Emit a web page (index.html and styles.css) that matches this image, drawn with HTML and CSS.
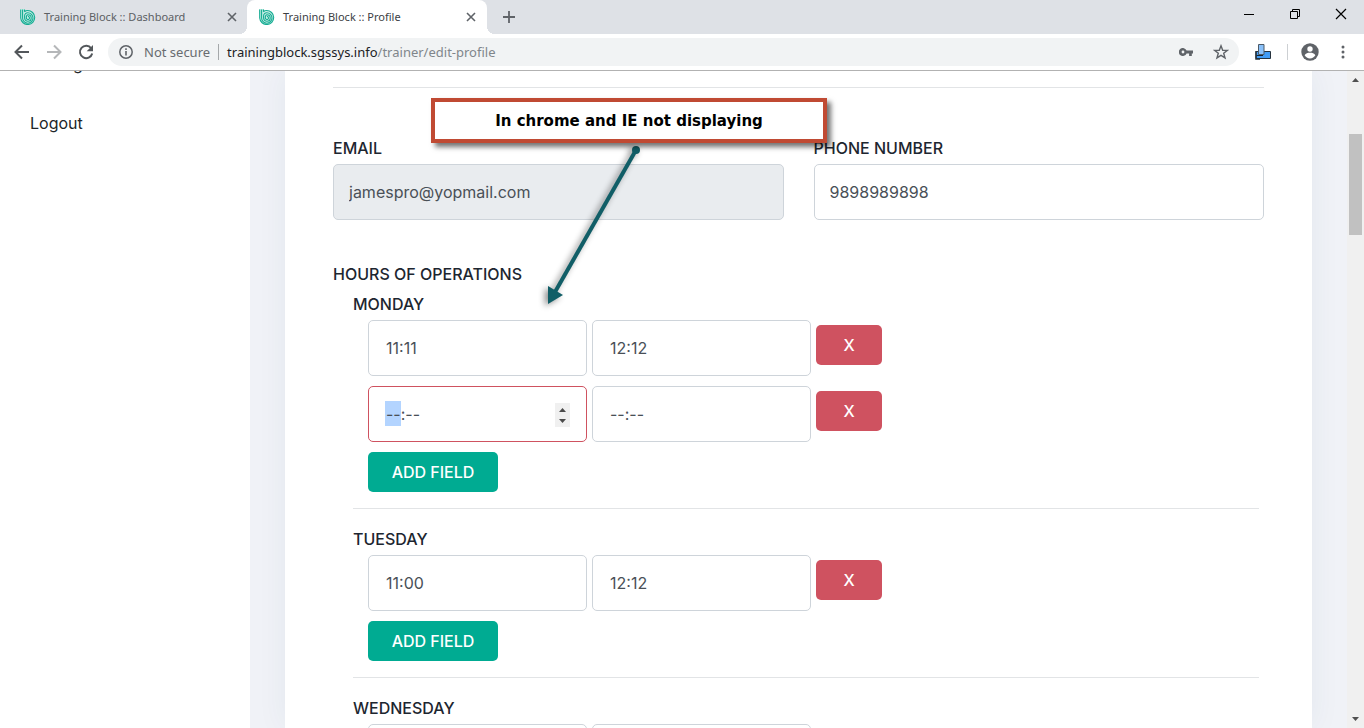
FILE: index.html
```html
<!DOCTYPE html>
<html lang="en">
<head>
<meta charset="utf-8">
<title>Training Block :: Profile</title>
<link rel="stylesheet" href="styles.css">
</head>
<body>
<svg class="defs" aria-hidden="true">
  <symbol id="logo" viewBox="0 0 16 16">
    <path d="M0 0h5v3.2C6 2.4 7.2 2 8.600 2A7 7 0 1 1 1 9V5H0z" fill="#c9efe7"/>
    <path d="M.7.500V9a7 7 0 1 0 7-7.500C6 1.500 5 2.200 4.500 2.800M2.600.5V9a5.200 5.200 0 1 0 5.200-5.200C6 3.800 4.600 5 4.600 7V9a3.300 3.300 0 1 0 3.300-3.300C6.800 5.700 6.300 6.700 6.300 8.800a1.600 1.600 0 1 0 1.600-1.500M4.500.5v2.300" fill="none" stroke="#14ab92" stroke-width="1.100"/>
  </symbol>
  <symbol id="cross" viewBox="0 0 10 10"><path d="M1 1l8 8M9 1l-8 8" fill="none" stroke="currentColor" stroke-width="1.600"/></symbol>
</svg>

<header class="browser">
  <div class="tab-strip">
    <div class="tab">
      <svg class="tab-logo"><use href="#logo"/></svg>
      <span class="tab-title">Training Block :: Dashboard</span>
      <button class="tab-close" aria-label="Close tab"><svg><use href="#cross"/></svg></button>
    </div>
    <div class="tab tab-active">
      <svg class="tab-logo"><use href="#logo"/></svg>
      <span class="tab-title">Training Block :: Profile</span>
      <button class="tab-close" aria-label="Close tab"><svg><use href="#cross"/></svg></button>
    </div>
    <button class="new-tab" aria-label="New tab"><svg viewBox="0 0 12 12" width="12" height="12"><path d="M6 0v12M0 6h12" stroke="#5f6368" stroke-width="1.800"/></svg></button>
    <div class="window-controls">
      <button aria-label="Minimize"><svg viewBox="0 0 12 12" width="12" height="12"><path d="M1 6.500h10" stroke="#000"/></svg></button>
      <button aria-label="Restore"><svg viewBox="0 0 12 12" width="12" height="12"><path d="M1.500 3.500h7v7h-7zM3.500 3.500v-2h7v7h-2" fill="none" stroke="#000"/></svg></button>
      <button aria-label="Close"><svg viewBox="0 0 12 12" width="12" height="12"><path d="M1 1l10 10M11 1L1 11" stroke="#000" stroke-width="1.200"/></svg></button>
    </div>
  </div>
  <div class="toolbar">
    <div class="nav-buttons">
      <button aria-label="Back"><svg viewBox="0 0 16 16" width="16" height="16"><path d="M15 8H2M8 1.500L1.500 8 8 14.500" fill="none" stroke="#53575b" stroke-width="2"/></svg></button>
      <button aria-label="Forward"><svg viewBox="0 0 16 16" width="16" height="16"><path d="M1 8h13M8 1.500L14.500 8 8 14.500" fill="none" stroke="#b5b7b9" stroke-width="2"/></svg></button>
      <button aria-label="Reload"><svg viewBox="0 0 16 16" width="16" height="16"><path d="M13.200 4.300A6.200 6.200 0 1 0 14.200 9.500" fill="none" stroke="#53575b" stroke-width="2"/><path d="M15 1v6.300H8.700z" fill="#53575b"/></svg></button>
    </div>
    <div class="omnibox">
      <svg class="info" viewBox="0 0 14 14" width="14" height="14"><circle cx="7" cy="7" r="6.200" fill="none" stroke="#5f6368" stroke-width="1.500"/><path d="M7 6v4.500M7 3.300v1.600" stroke="#5f6368" stroke-width="1.600"/></svg>
      <span class="security">Not secure</span>
      <span class="url">trainingblock.sgssys.info<span class="url-path">/trainer/edit-profile</span></span>
      <button aria-label="Saved passwords"><svg viewBox="0 0 14 8" width="14" height="8"><path d="M7.600 2.600H14v2.800h-1.200V8h-2.700V5.400H7.600A4 4 0 1 1 7.600 2.600zM4 2.600a1.400 1.400 0 1 0 0 2.800 1.400 1.400 0 0 0 0-2.800z" fill="#5f6368" fill-rule="evenodd"/></svg></button>
      <button aria-label="Bookmark this page"><svg viewBox="0 0 16 16" width="16" height="16"><path d="M8 1.800l1.700 4.400 4.700.2-3.700 2.900 1.300 4.600L8 11.300 4 13.900l1.300-4.600L1.600 6.400l4.700-.2z" fill="none" stroke="#5f6368" stroke-width="1.400"/></svg></button>
    </div>
    <button class="extension" aria-label="Extension"><svg viewBox="0 0 16 16" width="16" height="16"><path d="M1 7.500v7h14.500v-7z" fill="#429cf5" stroke="#26323d"/><path d="M1 7v8h4" fill="none" stroke="#26323d" stroke-width="1.500"/><path d="M3.500.5h5.500v10H3.500z" fill="#8ac1fa" stroke="#4c5a68"/><path d="M1.500 11.500H8" stroke="#17222c"/></svg></button>
    <span class="divider"></span>
    <button class="account" aria-label="Account"><svg viewBox="0 0 18 18" width="18" height="18"><circle cx="9" cy="9" r="8.700" fill="#5f6368"/><circle cx="9" cy="6" r="2.700" fill="#fff"/><path d="M3.600 12.300c1.200-2 3.200-2.600 5.400-2.600s4.200.6 5.400 2.600A6.300 6.300 0 0 1 9 15.400a6.300 6.300 0 0 1-5.400-3.100z" fill="#fff"/></svg></button>
    <button class="more" aria-label="Menu"><svg viewBox="0 0 4 14" width="4" height="14"><g fill="#5f6368"><circle cx="2" cy="2" r="1.500"/><circle cx="2" cy="7" r="1.500"/><circle cx="2" cy="12" r="1.500"/></g></svg></button>
  </div>
</header>

<div class="viewport">
  <nav class="sidebar">
    <a href="#">Settings</a>
    <a href="#">Logout</a>
  </nav>
  <main class="content">
    <form class="card">
      <hr>
      <div class="contact">
        <div class="field"><label for="email">EMAIL</label><input class="control" id="email" type="text" value="jamespro@yopmail.com" disabled></div>
        <div class="field"><label for="phone">PHONE NUMBER</label><input class="control" id="phone" type="text" value="9898989898"></div>
      </div>
      <h2>HOURS OF OPERATIONS</h2>
      <section class="day">
        <h3>MONDAY</h3>
        <div class="slots">
          <div class="slot">
            <input class="control time" aria-label="Monday opens" value="11:11">
            <input class="control time" aria-label="Monday closes" value="12:12">
            <button class="remove" type="button">X</button>
          </div>
          <div class="slot">
            <div class="time-edit">
              <input class="control time time-focused" aria-label="Monday second opening" value="--:--">
              <button class="spinner" type="button" aria-label="Change time"><svg viewBox="0 0 15 24" width="15" height="24"><path d="M4 9l3.500-4L11 9zM4 16h7l-3.500 4z" fill="#4b4b4b"/></svg></button>
            </div>
            <input class="control time" aria-label="Monday second closing" value="--:--">
            <button class="remove" type="button">X</button>
          </div>
          <button class="add" type="button">ADD FIELD</button>
        </div>
        <hr>
      </section>
      <section class="day">
        <h3>TUESDAY</h3>
        <div class="slots">
          <div class="slot">
            <input class="control time" aria-label="Tuesday opens" value="11:00">
            <input class="control time" aria-label="Tuesday closes" value="12:12">
            <button class="remove" type="button">X</button>
          </div>
          <button class="add" type="button">ADD FIELD</button>
        </div>
        <hr>
      </section>
      <section class="day">
        <h3>WEDNESDAY</h3>
        <div class="slots">
          <div class="slot">
            <input class="control time" aria-label="Wednesday opens">
            <input class="control time" aria-label="Wednesday closes">
          </div>
        </div>
      </section>
      <svg class="arrow" viewBox="0 0 110 170" width="110" height="170" aria-hidden="true"><g fill="#115e67"><path d="M96 12L15 154" stroke="#115e67" stroke-width="4"/><circle cx="96" cy="12" r="4"/><path d="M8 166V148l15 9z"/></g></svg>
      <div class="note">In chrome and IE not displaying</div>
    </form>
  </main>
  <div class="scrollbar" aria-hidden="true">
    <svg viewBox="0 0 7 4" width="7" height="4"><path d="M0 4l3.500-4L7 4z" fill="#505050"/></svg>
    <span class="track"><span class="thumb"></span></span>
    <svg viewBox="0 0 7 4" width="7" height="4"><path d="M0 0h7L3.500 4z" fill="#505050"/></svg>
  </div>
</div>
</body>
</html>
```

FILE: styles.css
```css
* { box-sizing: border-box; }
body {
  margin: 0;
  height: 100vh;
  overflow: hidden;
  display: flex;
  flex-direction: column;
  background: #fff;
  font: 16px/24px Inter, sans-serif;
  color: #1d2630;
}
button { padding: 0; border: 0; background: none; font: inherit; display: flex; align-items: center; justify-content: center; }
svg { display: block; }
.defs { display: none; }

.browser { flex: none; border-bottom: 1px solid #b2b2b2; font-family: "Noto Sans", sans-serif; }
.tab-strip { height: 34px; padding-left: 7px; display: flex; background: #dee1e6; }
.tab { position: relative; width: 240px; padding: 0 11px 0 12px; display: flex; align-items: center; gap: 8px; font-size: 11px; color: #5c6064; }
.tab:first-child { padding-left: 13px; padding-right: 10px; }
.tab-active { background: #fff; border-radius: 8px 8px 0 0; color: #3c4043; }
.tab-active::before, .tab-active::after { content: ""; position: absolute; bottom: 0; width: 8px; height: 8px; }
.tab-active::before { right: 100%; background: radial-gradient(circle at 0 0, #dee1e6 8px, #fff 8px); }
.tab-active::after { left: 100%; background: radial-gradient(circle at 100% 0, #dee1e6 8px, #fff 8px); }
.tab-logo { width: 16px; height: 16px; }
.tab-title { flex: 1; white-space: nowrap; }
.tab-close svg { width: 10px; height: 10px; color: #5f6368; }
.new-tab { width: 44px; }
.window-controls { margin-left: auto; display: flex; align-items: flex-start; }
.window-controls button { width: 46px; height: 28px; }

.toolbar { height: 36px; padding: 0 19px 0 14px; display: flex; align-items: center; }
.nav-buttons { display: flex; gap: 16px; margin-right: 14px; }
.omnibox { flex: 1; height: 28px; margin-right: 16px; padding: 0 10px; display: flex; align-items: center; gap: 20px; border-radius: 14px; background: #f1f3f4; font-size: 13px; }
.info { margin: 0 -9px 0 1px; }
.security { padding-right: 8px; margin-right: -12px; border-right: 1px solid #a5a8aa; line-height: 16px; color: #686c70; }
.url { flex: 1; color: #202124; }
.url-path { color: #80868b; }
.divider { width: 1px; height: 16px; margin: 0 13px 0 16px; background: #cdd0d3; }
.more { margin-left: 22px; }

.viewport { flex: 1; min-height: 0; display: flex; overflow: hidden; }
.sidebar { width: 250px; margin-top: -19px; padding-left: 30px; display: flex; flex-direction: column; gap: 35px; }
.sidebar a { color: #212529; text-decoration: none; }
.content { flex: 1; padding: 0 35px; background: #f0f2f7; }
.card { position: relative; height: 100%; overflow: hidden; padding: 16px 48px 0; background: #fff; box-shadow: 0 0 30px rgba(31, 66, 97, .06); }
hr { margin: 0; border: 0; border-top: 1px solid #e2e4e6; }
.contact { display: grid; grid-template-columns: 1fr 1fr; gap: 30px; margin: 48px 0 42px; }
label, h2, h3 { display: block; margin: 0; font-size: 16px; font-weight: 500; }
label, h3 { margin-bottom: 4px; }
h2 { margin-bottom: 6px; }
.control { display: block; width: 100%; height: 56px; padding: 0 15px; border: 1px solid #ced4da; border-radius: 5px; background: #fff; font: inherit; color: #495057; outline: 0; }
.control:disabled { background: #e9ecef; }
.day { margin-left: 20px; margin-right: 5px; }
.day hr { margin: 16px 0 18px; }
.slots { margin-left: 15px; display: flex; flex-direction: column; align-items: flex-start; gap: 10px; }
.slot { display: flex; gap: 5px; }
.time { width: 219px; padding: 0 17px; }
.time-edit { position: relative; }
.time-focused { border-color: #cf5260; background: linear-gradient(#b3d4ff, #b3d4ff) 16px 14px / 16px 25px no-repeat #fff; }
.spinner { position: absolute; top: 17px; right: 17px; width: 15px; height: 24px; background: #f0f0f0; }
.remove, .add { height: 40px; border-radius: 5px; font-weight: 500; color: #fff; }
.remove { width: 66px; margin-top: 5px; background: #cf5260; }
.add { width: 130px; background: #00ab92; }

.note { position: absolute; top: 27px; left: 146px; width: 396px; height: 45px; display: flex; align-items: center; justify-content: center; border: 4px solid #c04a33; background: #fff; box-shadow: 4px 4px 5px rgba(0, 0, 0, .55); font: bold 15px/24px "DejaVu Sans", sans-serif; color: #000; }
.arrow { position: absolute; top: 67px; left: 255px; filter: drop-shadow(-3px 2px 3px rgba(0, 0, 0, .45)); }

.scrollbar { width: 17px; padding: 7px 0; display: flex; flex-direction: column; align-items: center; background: #f0f0f0; }
.track { flex: 1; width: 13px; padding: 52px 0; }
.thumb { display: block; height: 101px; background: #c1c1c1; }
```
